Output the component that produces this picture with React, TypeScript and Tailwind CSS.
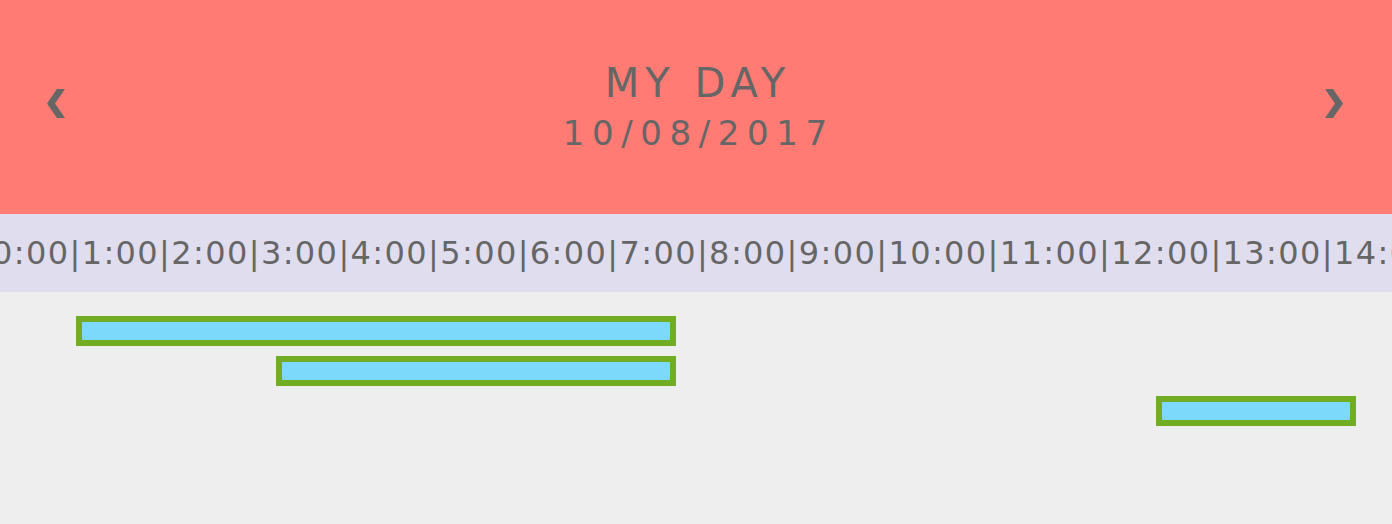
import React from "react";

const hours = Array.from({ length: 24 }, (_, i) => `${i}:00`).join("|");

const events = [
  { id: 1, left: "ml-[76px]", width: "w-[600px]" },
  { id: 2, left: "ml-[276px]", width: "w-[400px]" },
  { id: 3, left: "ml-[1156px]", width: "w-[200px]" },
];

function Chevron({ dir }: { dir: "left" | "right" }) {
  const points =
    dir === "left"
      ? "18,0 10,0 0,14.5 10,29 18,29 8,14.5"
      : "0,0 8,0 18,14.5 8,29 0,29 10,14.5";
  return (
    <button className="mb-[7px] text-[#666666]">
      <svg width="18" height="29" viewBox="0 0 18 29">
        <polygon points={points} fill="currentColor" />
      </svg>
    </button>
  );
}

export default function App() {
  return (
    <div className="flex h-screen flex-col font-['DejaVu_Sans',Verdana,sans-serif] text-[#666666]">
      {/* header */}
      <div className="flex h-[214px] shrink-0 items-center justify-between bg-[#ff7b74] pl-[47px] pr-[49px]">
        <Chevron dir="left" />
        <div className="flex flex-col items-center gap-[8px]">
          <div className="text-[40px] leading-[44px] tracking-[6px] pl-[6px]">MY DAY</div>
          <div className="text-[34px] leading-[40px] tracking-[7.6px] pl-[7.6px]">10/08/2017</div>
        </div>
        <Chevron dir="right" />
      </div>

      {/* timeline */}
      <div className="flex h-[78px] shrink-0 items-center overflow-hidden bg-[#dfddee]">
        <div className="ml-[-8px] whitespace-nowrap text-[32px] leading-none tracking-[1.4px]">
          {hours}
        </div>
      </div>

      {/* events */}
      <div className="flex flex-1 flex-col gap-[10px] bg-[#eeeeee] pt-[24px]">
        {events.map((e) => (
          <div
            key={e.id}
            className={`${e.left} ${e.width} h-[30px] border-[6px] border-[#72ac22] bg-[#7dd9fc]`}
          />
        ))}
      </div>
    </div>
  );
}
